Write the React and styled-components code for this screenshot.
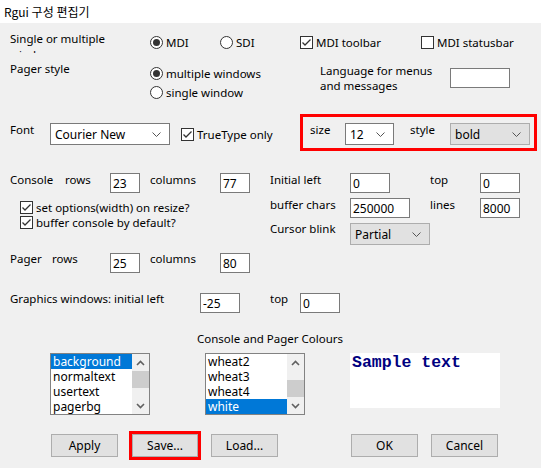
import React from 'react'
import styled, { createGlobalStyle } from 'styled-components'

const GlobalStyle = createGlobalStyle`
    html, body {
        margin: 0;
        padding: 0;
        background: #f0f0f0;
    }
    * {
        box-sizing: border-box;
    }
`

const Chevron = ({ up }) => (
    <svg width='9' height='6' viewBox='0 0 9 6'>
        <polyline
            points={up ? '1,5 4.5,1.5 8,5' : '1,1 4.5,4.5 8,1'}
            fill='none'
            stroke='#606060'
            strokeWidth='1.6'
        />
    </svg>
)

const ComboArrow = () => (
    <svg width='9' height='5' viewBox='0 0 9 5'>
        <polyline points='0.5,0.5 4.5,4.5 8.5,0.5' fill='none' stroke='#555' strokeWidth='1' />
    </svg>
)

const Radio = ({ on, children, ...rest }) => (
    <Option {...rest}>
        <RadioMark $on={on} />
        <span>{children}</span>
    </Option>
)

const Check = ({ on, children, ...rest }) => (
    <Option {...rest}>
        <CheckMark>
            {on && (
                <svg width='11' height='11' viewBox='0 0 11 11'>
                    <polyline points='1.5,5.5 4,8 9.5,2.5' fill='none' stroke='#333' strokeWidth='1.3' />
                </svg>
            )}
        </CheckMark>
        <span>{children}</span>
    </Option>
)

const Combo = ({ value, w, mt, gray }) => (
    <ComboBox $w={w} $mt={mt} $gray={gray}>
        <span>{value}</span>
        <ComboArrow />
    </ComboBox>
)

const List = ({ items, selected, thumbTop }) => (
    <ListBox>
        <Items>
            {items.map(it => (
                <Item key={it} $sel={it === selected}>{it}</Item>
            ))}
        </Items>
        <ScrollBar>
            <Arrow><Chevron up /></Arrow>
            <Track>
                <Thumb $top={thumbTop} />
            </Track>
            <Arrow><Chevron /></Arrow>
        </ScrollBar>
    </ListBox>
)

const App = () => {
    return (
        <Dialog>
            <GlobalStyle />
            <TitleBar>Rgui 구성 편집기</TitleBar>
            <Body>
                <Row $mt={8}>
                    <Static $w={140} $clip={22}>Single or multiple<br />windows</Static>
                    <Radio $w={70} $mt={3} on>MDI</Radio>
                    <Radio $w={80} $mt={3}>SDI</Radio>
                    <Check $w={121} $mt={3} on>MDI toolbar</Check>
                    <Check $mt={3}>MDI statusbar</Check>
                </Row>

                <Row $mt={8} $h={40}>
                    <Static $w={140}>Pager style</Static>
                    <RadioStack>
                        <Radio $h={19} on>multiple windows</Radio>
                        <Radio $h={19}>single window</Radio>
                    </RadioStack>
                    <Static $w={130} $mt={2} $lh={15}>Language for menus<br />and messages</Static>
                    <TextBox $w={60} $mt={7} defaultValue='' readOnly />
                </Row>

                <Row $mt={13}>
                    <Static $w={40} $mt={8}>Font</Static>
                    <Combo value='Courier New' w={120} mt={9} />
                    <Check $w={119} $ml={11} $mt={12} on>TrueType only</Check>
                    <Highlight>
                        <Static $w={35} $mt={5}>size</Static>
                        <Combo value='12' w={49} mt={6} />
                        <Static $w={40} $ml={16} $mt={5}>style</Static>
                        <Combo value='bold' w={80} mt={6} gray />
                    </Highlight>
                </Row>

                <Row $mt={21}>
                    <Column $w={260}>
                        <Row>
                            <Static $w={55}>Console</Static>
                            <Static $w={45}>rows</Static>
                            <TextBox $w={30} $mt={1} defaultValue='23' readOnly />
                            <Static $w={70} $ml={10}>columns</Static>
                            <TextBox $w={30} $mt={1} defaultValue='77' readOnly />
                        </Row>
                        <CheckList>
                            <Check $h={15} on>set options(width) on resize?</Check>
                            <Check $h={15} on>buffer console by default?</Check>
                        </CheckList>
                    </Column>
                    <Column>
                        <Row>
                            <Static $w={80}>Initial left</Static>
                            <TextBox $w={40} $mt={1} defaultValue='0' readOnly />
                            <Static $w={50} $ml={40}>top</Static>
                            <TextBox $w={40} $mt={1} defaultValue='0' readOnly />
                        </Row>
                        <Row $mt={4}>
                            <Static $w={80}>buffer chars</Static>
                            <TextBox $w={60} $mt={1} defaultValue='250000' readOnly />
                            <Static $w={50} $ml={20}>lines</Static>
                            <TextBox $w={40} $mt={1} defaultValue='8000' readOnly />
                        </Row>
                        <Row $mt={3}>
                            <Static $w={80}>Cursor blink</Static>
                            <Combo value='Partial' w={80} mt={2} gray />
                        </Row>
                    </Column>
                </Row>

                <Row $mt={6}>
                    <Static $w={42}>Pager</Static>
                    <Static $w={58}>rows</Static>
                    <TextBox $w={30} $mt={2} defaultValue='25' readOnly />
                    <Static $w={70} $ml={10}>columns</Static>
                    <TextBox $w={30} $mt={2} defaultValue='80' readOnly />
                </Row>

                <Row $mt={18}>
                    <Static $w={190}>Graphics windows: initial left</Static>
                    <TextBox $w={40} $mt={2} defaultValue='-25' readOnly />
                    <Static $w={30} $ml={30}>top</Static>
                    <TextBox $w={40} $mt={2} defaultValue='0' readOnly />
                </Row>

                <Caption>Console and Pager Colours</Caption>

                <ColourRow>
                    <List
                        items={['background', 'normaltext', 'usertext', 'pagerbg']}
                        selected='background'
                        thumbTop={0}
                    />
                    <List
                        items={['wheat2', 'wheat3', 'wheat4', 'white']}
                        selected='white'
                        thumbTop={9}
                    />
                    <Sample>Sample text</Sample>
                </ColourRow>

                <ButtonRow>
                    <Button $ml={41}>Apply</Button>
                    <Marked>
                        <Button $w={66} $mt={0}>Save...</Button>
                    </Marked>
                    <Button $ml={10}>Load...</Button>
                    <Button $ml={73}>OK</Button>
                    <Button $ml={13}>Cancel</Button>
                </ButtonRow>
            </Body>
        </Dialog>
    )
}

const Dialog = styled.div`
    width: 541px;
    height: 468px;
    overflow: hidden;
    background: #f0f0f0;
    color: #000;
    font-family: "Noto Sans", "Noto Sans CJK KR", sans-serif;
    font-size: 11.5px;
`
const TitleBar = styled.div`
    height: 23px;
    background: #fff;
    padding-left: 4px;
    display: flex;
    align-items: center;
    font-family: "Noto Sans CJK KR", "Noto Sans", sans-serif;
    font-size: 12px;
`
const Body = styled.div`
    padding-left: 10px;
`
const Row = styled.div`
    display: flex;
    align-items: flex-start;
    margin-top: ${p => p.$mt || 0}px;
    height: ${p => (p.$h ? `${p.$h}px` : 'auto')};
`
const Column = styled.div`
    display: flex;
    flex-direction: column;
    width: ${p => (p.$w ? `${p.$w}px` : 'auto')};
    flex: none;
`
const Static = styled.div`
    flex: none;
    width: ${p => (p.$w ? `${p.$w}px` : 'auto')};
    margin-top: ${p => p.$mt || 0}px;
    margin-left: ${p => p.$ml || 0}px;
    line-height: ${p => p.$lh || 16}px;
    white-space: nowrap;
    height: ${p => (p.$clip ? `${p.$clip}px` : 'auto')};
    overflow: hidden;
`
const Option = styled.div`
    flex: none;
    display: flex;
    align-items: center;
    gap: 3px;
    width: ${p => (p.$w ? `${p.$w}px` : 'auto')};
    height: ${p => p.$h || 16}px;
    margin-top: ${p => p.$mt || 0}px;
    margin-left: ${p => p.$ml || 0}px;
    white-space: nowrap;
`
const RadioMark = styled.span`
    flex: none;
    width: 13px;
    height: 13px;
    border: 1px solid #333;
    border-radius: 50%;
    background: #fff;
    display: flex;
    align-items: center;
    justify-content: center;

    &::after {
        content: '';
        display: ${p => (p.$on ? 'block' : 'none')};
        width: 7px;
        height: 7px;
        border-radius: 50%;
        background: #333;
    }
`
const CheckMark = styled.span`
    flex: none;
    width: 13px;
    height: 13px;
    border: 1px solid #333;
    background: #fff;
    display: flex;
    align-items: center;
    justify-content: center;
`
const RadioStack = styled.div`
    flex: none;
    width: 170px;
    padding-top: 3px;
    display: flex;
    flex-direction: column;
`
const CheckList = styled.div`
    display: flex;
    flex-direction: column;
    margin-top: 7px;
    padding-left: 10px;
`
const TextBox = styled.input`
    flex: none;
    width: ${p => p.$w}px;
    height: 20px;
    margin: ${p => p.$mt || 0}px 0 0 0;
    padding: 0 2px;
    border: 1px solid #7a7a7a;
    background: #fff;
    font-family: inherit;
    font-size: 12px;
    color: #000;
    outline: none;
`
const ComboBox = styled.div`
    flex: none;
    width: ${p => p.$w}px;
    height: 22px;
    margin-top: ${p => p.$mt || 0}px;
    padding: 0 8px 0 4px;
    display: flex;
    align-items: center;
    justify-content: space-between;
    font-size: 12px;
    border: 1px solid ${p => (p.$gray ? '#adadad' : '#7a7a7a')};
    background: ${p => (p.$gray ? '#e1e1e1' : '#fff')};
`
const Highlight = styled.div`
    flex: none;
    display: flex;
    align-items: flex-start;
    width: 237px;
    height: 37px;
    padding-left: 7px;
    border: 3px solid #ff0000;
`
const Caption = styled.div`
    margin-top: 18px;
    padding-left: 187px;
    line-height: 16px;
`
const ColourRow = styled.div`
    display: flex;
    align-items: flex-start;
    gap: 55px;
    margin-top: 6px;
    padding-left: 40px;

    & > :last-child {
        margin-left: -10px;
    }
`
const ListBox = styled.div`
    flex: none;
    width: 100px;
    height: 62px;
    border: 1px solid #828282;
    background: #fff;
    display: flex;
`
const Items = styled.div`
    flex: 1;
`
const Item = styled.div`
    height: 15px;
    line-height: 15px;
    padding-left: 2px;
    font-size: 12px;
    white-space: nowrap;
    background: ${p => (p.$sel ? '#0078d7' : 'transparent')};
    color: ${p => (p.$sel ? '#fff' : '#000')};
`
const ScrollBar = styled.div`
    width: 17px;
    display: flex;
    flex-direction: column;
    background: #f0f0f0;
`
const Arrow = styled.div`
    height: 17px;
    display: flex;
    align-items: center;
    justify-content: center;
`
const Track = styled.div`
    flex: 1;
    position: relative;
`
const Thumb = styled.div`
    position: absolute;
    left: 0;
    right: 0;
    top: ${p => p.$top}px;
    height: 17px;
    background: #cdcdcd;
`
const Sample = styled.div`
    flex: none;
    width: 150px;
    height: 55px;
    background: #fff;
    padding: 1px 2px;
    font-family: "Liberation Mono", "Courier New", monospace;
    font-weight: bold;
    font-size: 16.5px;
    line-height: 18px;
    color: #000080;
    white-space: nowrap;
`
const ButtonRow = styled.div`
    display: flex;
    align-items: flex-start;
    margin-top: 16px;
`
const Button = styled.button`
    flex: none;
    width: ${p => p.$w || 67}px;
    height: 23px;
    margin: ${p => (p.$mt === undefined ? 3 : p.$mt)}px 0 0 ${p => p.$ml || 0}px;
    padding: 0;
    border: 1px solid #adadad;
    background: #e1e1e1;
    font-family: "Noto Sans", sans-serif;
    font-size: 12px;
    color: #000;
`
const Marked = styled.div`
    flex: none;
    width: 72px;
    height: 29px;
    margin-left: 11px;
    border: 3px solid #ff0000;
`

export default App
